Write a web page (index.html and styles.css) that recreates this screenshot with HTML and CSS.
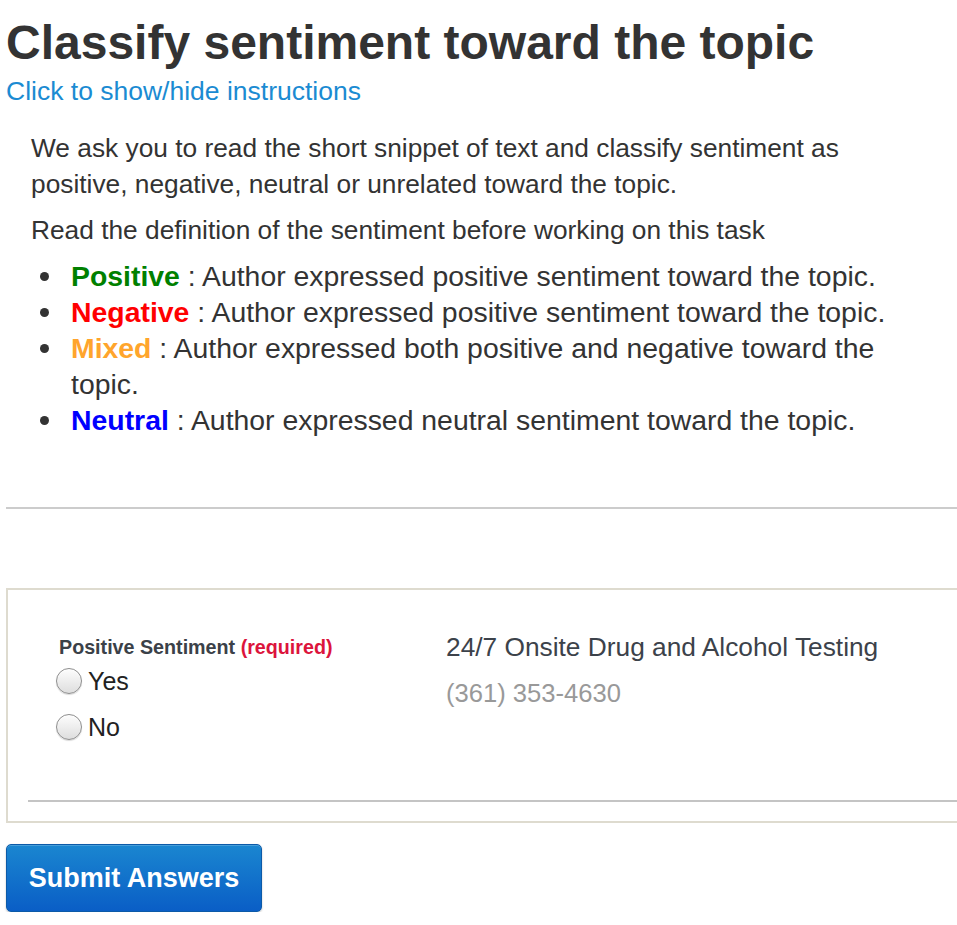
FILE: index.html
```html
<!DOCTYPE html>
<html>
<head>
<meta charset="utf-8">
<link rel="stylesheet" href="styles.css">
</head>
<body>
<h1 class="title">Classify sentiment toward the topic</h1>
<a class="toggle" href="#">Click to show/hide instructions</a>
<div class="instructions">
  <p class="para">We ask you to read the short snippet of text and classify sentiment as positive, negative, neutral or unrelated toward the topic.</p>
  <p class="para">Read the definition of the sentiment before working on this task</p>
  <ul class="defs">
    <li><b class="pos">Positive</b> : Author expressed positive sentiment toward the topic.</li>
    <li><b class="neg">Negative</b> : Author expressed positive sentiment toward the topic.</li>
    <li><b class="mix">Mixed</b> : Author expressed both positive and negative toward the topic.</li>
    <li><b class="neu">Neutral</b> : Author expressed neutral sentiment toward the topic.</li>
  </ul>
</div>
<hr class="rule">
<div class="unit">
  <div class="unit-row">
    <div class="question">
      <div class="label">Positive Sentiment <span class="req">(required)</span></div>
      <label class="opt"><span class="radio"></span>Yes</label>
      <label class="opt"><span class="radio"></span>No</label>
    </div>
    <div class="info">
      <div class="name">24/7 Onsite Drug and Alcohol Testing</div>
      <div class="phone">(361) 353-4630</div>
    </div>
  </div>
  <hr class="inner-rule">
</div>
<button class="submit">Submit Answers</button>
</body>
</html>
```
FILE: styles.css
```css
html, body {
  margin: 0;
  padding: 0;
  background: #fff;
}
body {
  padding: 0 0 0 6px;
  font-family: "Liberation Sans", Arial, sans-serif;
  color: #333;
  overflow: hidden;
}
.title {
  margin: 0;
  padding-top: 15px;
  font-size: 48px;
  line-height: 56px;
  font-weight: bold;
  color: #333;
}
.toggle {
  display: block;
  margin-top: 5px;
  font-size: 26.5px;
  line-height: 30px;
  color: #1b8bd2;
  text-decoration: none;
}
.instructions {
  width: 890px;
  margin: 24px 0 0 25px;
  font-size: 26.3px;
  line-height: 36px;
  color: #333;
}
.para {
  margin: 0 0 10px;
}
.defs {
  margin: 2px 0 0 0;
  padding: 0 0 0 40px;
  font-size: 28.4px;
  list-style: none;
}
.defs li {
  position: relative;
  line-height: 36px;
}
.defs li::before {
  content: "";
  position: absolute;
  left: -31px;
  top: 14px;
  width: 9px;
  height: 9px;
  border-radius: 50%;
  background: #333;
}
.pos { color: #008000; }
.neg { color: #ff0000; }
.mix { color: #ffa52c; }
.neu { color: #0000ff; }
.rule {
  margin: 69px 0 0 0;
  border: 0;
  border-top: 2px solid #cccccc;
  height: 0;
}
.unit {
  margin-top: 79px;
  border: 2px solid #dedbcf;
  border-right: 0;
  padding: 0 0 0 20px;
}
.unit-row {
  display: grid;
  grid-template-columns: 418px 1fr;
  padding: 46px 0 0 0;
  height: 210px;
  box-sizing: border-box;
}
.question {
  padding-left: 31px;
}
.label {
  font-size: 19.7px;
  line-height: 22px;
  font-weight: bold;
  color: #3b4148;
}
.req {
  color: #dc143c;
}
.opt {
  display: flex;
  align-items: center;
  height: 46px;
  font-size: 25px;
  color: #222;
}
.radio {
  width: 24px;
  height: 24px;
  border-radius: 50%;
  border: 1px solid #8e8e8e;
  background: linear-gradient(#fdfdfd, #dedede);
  box-shadow: inset 0 1px 1px rgba(255,255,255,0.8), 0 1px 1px rgba(0,0,0,0.15);
  margin-right: 6px;
  margin-left: -3px;
  flex: none;
}
.name {
  margin-top: -3px;
  font-size: 26.3px;
  line-height: 28px;
  color: #3c424a;
}
.phone {
  margin-top: 18px;
  font-size: 25.6px;
  line-height: 28px;
  color: #999;
}
.inner-rule {
  margin: 0;
  border: 0;
  border-top: 2px solid #c4c4c4;
  height: 0;
}
.unit::after {
  content: "";
  display: block;
  height: 19px;
}
.submit {
  display: block;
  margin-top: 21px;
  width: 256px;
  height: 68px;
  border: 1px solid #0c5aa8;
  border-radius: 5px;
  background: linear-gradient(#1a86d0, #0a5ec6);
  color: #fff;
  font-family: "Liberation Sans", Arial, sans-serif;
  font-weight: bold;
  font-size: 27px;
  box-shadow: 0 1px 2px rgba(0,0,0,0.25), inset 0 1px 0 rgba(255,255,255,0.2);
  padding: 0;
}
```
